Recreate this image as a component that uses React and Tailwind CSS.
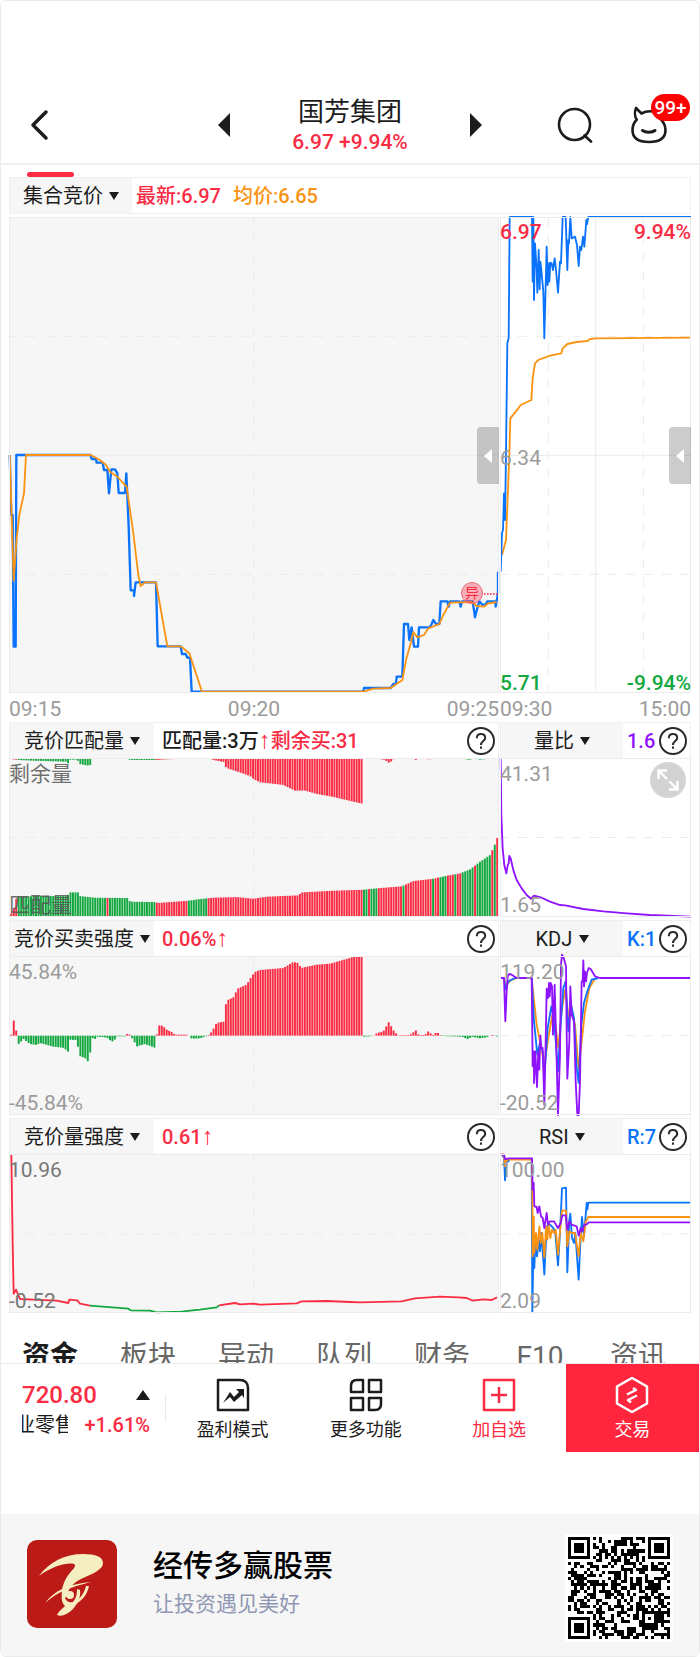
import React from "react";

const RED = "#fa2c44";
const GREEN = "#12a83f";
const BLUE = "#0b73fb";
const ORANGE = "#fb9312";
const PURPLE = "#9013fe";

const BAR_COUNT = 198;
const BAR_STEP = 7.4;

// series points are kept as "x y x y ..." strings, three units to a pixel
const PRICE =
  "29 735 34 915 38 915 41 1310 47 1310 49 735 272 735 275 747 288 747 290 758 308 758 312 780 322 780 327 850 334 778 345 778 352 790 356 849 375 849 379 790 386 950 392 1141 402 1141 402 1158 407 1117 468 1117 473 1309 542 1309 546 1332 557 1332 562 1343 570 1343 575 1445 1090 1445 1092 1434 1172 1434 1180 1422 1188 1422 1190 1400 1207 1400 1212 1242 1224 1242 1228 1290 1235 1252 1242 1310 1254 1310 1257 1252 1290 1252 1295 1242 1300 1230 1308 1242 1318 1242 1322 1174 1342 1174 1346 1190 1350 1174 1378 1174 1382 1190 1386 1174 1418 1174 1425 1222 1433 1190 1438 1174 1447 1184 1457 1184 1462 1174 1486 1174 1487 1190 1494 1150 1494 1085";
const PRICE_AVG =
  "29 735 41 1112 50 985 58 915 72 850 78 735 272 735 300 750 318 765 330 785 352 800 372 822 380 830 400 970 415 1095 422 1128 436 1117 468 1117 502 1309 542 1309 568 1330 606 1445 1090 1445 1120 1436 1172 1434 1207 1410 1218 1350 1232 1300 1240 1266 1252 1282 1272 1275 1285 1255 1318 1242 1330 1215 1350 1178 1415 1176 1430 1188 1452 1190 1465 1180 1490 1176";
const DAY =
  "452 1085 456 970 459 960 462 850 465 930 468 735 472 400 476 385 479 21 546 21 548 215 550 21 552 270 555 100 560 180 562 248 566 120 569 238 571 155 574 180 580 245 583 385 590 110 593 225 596 160 598 215 601 158 605 160 609 180 614 145 618 180 624 248 630 155 633 160 638 21 647 21 652 180 655 90 657 100 661 21 665 85 675 80 681 105 686 168 690 110 694 120 699 80 703 110 709 30 711 42 715 21 1023 21";
const DAY_AVG =
  "456 1035 468 990 478 735 481 625 505 595 512 585 544 570 548 505 555 460 565 450 600 437 634 430 638 415 652 402 680 396 712 393 720 387 740 385 1023 383";
const RATIO =
  "452 128 454 300 458 400 463 450 469 475 473 450 476 445 478 422 482 430 490 465 500 495 515 520 530 540 543 551 552 542 575 548 600 560 630 570 645 571 700 582 760 589 830 595 900 600 1023 605";
const KDJ_J =
  "452 190 462 190 466 320 470 230 473 185 478 178 485 180 500 190 545 190 548 455 552 410 552 505 556 410 561 517 565 410 568 465 571 362 574 400 578 400 583 570 588 330 590 222 594 250 597 205 599 245 602 205 606 215 609 360 614 210 618 360 624 601 630 420 633 150 636 120 641 130 648 155 650 350 652 492 658 380 661 215 665 300 672 320 677 500 682 601 686 601 690 500 695 200 698 200 700 137 702 215 705 170 708 200 711 175 716 160 722 163 735 185 750 190 1023 190";
const KDJ_K =
  "462 190 467 225 475 200 495 190 545 190 552 320 562 420 570 385 578 410 583 490 593 340 604 275 612 310 624 470 632 330 640 220 647 200 655 350 663 270 672 310 680 460 686 505 694 330 702 265 712 230 725 195 745 190";
const KDJ_D =
  "462 190 468 215 480 198 500 190 545 190 550 240 560 330 570 380 583 450 595 370 607 300 615 320 625 400 636 280 646 225 656 310 666 295 675 330 686 465 695 380 705 290 718 220 735 192";
const RSI_1 =
  "456 140 462 140 465 212 470 155 476 155 478 148 545 148 547 608 550 430 553 475 556 400 561 440 566 390 570 425 574 370 583 495 590 350 600 345 610 355 616 370 624 467 630 370 636 236 648 234 652 488 658 330 661 312 666 385 672 400 676 370 686 510 692 380 696 322 702 380 710 280 712 300 715 279 1023 279";
const RSI_2 =
  "452 135 462 135 465 170 470 150 545 150 547 240 548 440 551 320 553 430 558 370 562 420 568 350 572 400 577 370 583 443 588 350 592 390 596 345 601 385 606 360 612 370 617 360 624 435 630 365 636 303 648 303 652 410 658 365 665 370 675 370 686 440 692 370 700 395 707 335 711 330 715 322 1023 322";
const RSI_3 =
  "452 135 462 135 465 148 480 146 546 146 548 240 551 220 553 290 560 292 563 310 568 290 573 320 578 325 583 355 590 310 594 345 600 335 612 335 618 345 624 355 632 340 637 317 647 317 652 360 658 335 665 345 680 350 686 378 692 355 697 365 703 345 709 345 716 338 1023 338";

const MATCHED = [[34, 595], [42, 578], [48, 552], [55, 545], [120, 543], [202, 543], [209, 532], [234, 532], [239, 543], [285, 548], [385, 549], [390, 560], [468, 561], [472, 564], [565, 557], [600, 552], [640, 548], [710, 546], [760, 551], [800, 545], [895, 541], [905, 532], [1000, 527], [1090, 524], [1140, 519], [1205, 514], [1240, 498], [1300, 491], [1340, 482], [1380, 475], [1410, 463], [1440, 440], [1470, 420], [1482, 395], [1492, 368]];
const REMAIN = [[34, 128], [42, 133], [49, 133], [55, 134], [100, 136], [198, 139], [204, 144], [210, 133], [232, 133], [239, 146], [270, 152], [276, 128], [378, 128], [385, 133], [400, 134], [470, 134], [500, 132], [560, 130], [630, 130], [640, 134], [672, 140], [679, 158], [710, 168], [750, 182], [762, 192], [780, 201], [850, 209], [885, 226], [915, 226], [950, 236], [1000, 245], [1050, 257], [1090, 266], [1091, 128], [1130, 129], [1155, 134], [1169, 144], [1178, 133], [1190, 128], [1235, 129], [1247, 134], [1255, 129], [1287, 132], [1310, 130], [1385, 129], [1408, 134], [1420, 129], [1440, 133], [1480, 129]];
const STRENGTH = [[34, 360], [41, 316], [49, 348], [56, 388], [71, 373], [90, 388], [110, 391], [120, 385], [160, 396], [195, 400], [203, 418], [210, 375], [230, 376], [239, 424], [255, 430], [268, 445], [275, 366], [283, 377], [290, 366], [320, 368], [334, 380], [342, 380], [350, 365], [378, 365], [386, 350], [393, 372], [400, 370], [408, 396], [435, 388], [467, 400], [473, 332], [488, 333], [500, 345], [515, 352], [525, 360], [560, 360], [567, 363], [575, 372], [600, 371], [615, 366], [625, 362], [635, 352], [650, 325], [672, 321], [679, 258], [700, 248], [713, 222], [740, 210], [755, 185], [765, 172], [780, 166], [850, 160], [880, 142], [895, 145], [903, 160], [950, 150], [990, 147], [1050, 130], [1060, 126], [1091, 125], [1092, 366], [1120, 364], [1130, 356], [1150, 350], [1162, 330], [1169, 318], [1177, 347], [1185, 348], [1191, 362], [1230, 361], [1248, 347], [1256, 361], [1275, 361], [1285, 350], [1293, 357], [1298, 362], [1305, 355], [1318, 355], [1323, 364], [1385, 366], [1405, 374], [1415, 366], [1440, 371], [1460, 368], [1475, 360], [1481, 363], [1494, 366]];

const GREEN_MATCHED = [[52, 322], [329, 382], [389, 469], [564, 620], [1092, 1103], [1112, 1122], [1128, 1133], [1208, 1216], [1297, 1303], [1318, 1340], [1362, 1370], [1384, 1421], [1429, 1474], [1481, 1488]];
const GREEN_REMAIN = [[52, 378], [389, 469], [570, 625], [1092, 1125], [1380, 1470]];

function valueAt(keys, x) {
  for (let i = 1; i < keys.length; i++) {
    const [x0, y0] = keys[i - 1];
    const [x1, y1] = keys[i];
    if (x <= x1) return y0 + ((y1 - y0) * Math.max(0, x - x0)) / (x1 - x0);
  }
  return keys[keys.length - 1][1];
}

const inRuns = (runs, x) => runs.some(([a, b]) => x >= a && x <= b);

function Bars({ keys, base, green }) {
  const bars = [];
  for (let i = 0; i < BAR_COUNT; i++) {
    const x = 34 + i * BAR_STEP;
    const y = valueAt(keys, x);
    const isGreen = green ? inRuns(green, x) : y > base;
    bars.push(
      <rect
        key={i}
        x={x - 3}
        y={Math.min(y, base)}
        width="5.8"
        height={Math.abs(base - y)}
        fill={isGreen ? GREEN : RED}
      />
    );
  }
  return <g>{bars}</g>;
}

function Line({ points, color, width = 5.5 }) {
  return <polyline points={points} fill="none" stroke={color} strokeWidth={width} strokeLinejoin="round" />;
}

function Dash(props) {
  return <line {...props} stroke="#ebebeb" strokeWidth="3" strokeDasharray="27 27" />;
}

function Plot({ box, height, gray, children, overlay }) {
  return (
    <div className={gray ? "relative bg-[#f6f6f6]" : "relative bg-white"}>
      <svg
        viewBox={box}
        preserveAspectRatio="none"
        className={height === "tall" ? "block w-full h-[476px] overflow-visible" : "block w-full h-[159px] overflow-visible"}
      >
        {children}
      </svg>
      <div className="absolute inset-0 border border-[#ececec] pointer-events-none"></div>
      {overlay}
    </div>
  );
}

function Scale({ top, bottom, tone = "text-[#9b9b9b]" }) {
  return (
    <div className={`absolute inset-0 flex flex-col justify-between pt-1 text-[21px] leading-6 ${tone}`}>
      <span>{top}</span>
      <span>{bottom}</span>
    </div>
  );
}

function Picker({ id, label }) {
  return (
    <label htmlFor={id} className="flex items-center gap-[6px] text-[#1c1c1c]">
      <select id={id} aria-label={label} className="appearance-none bg-transparent outline-none text-xl leading-7">
        <option>{label}</option>
      </select>
      <svg viewBox="0 0 10 8" className="w-[10px] h-2 shrink-0" fill="#1c1c1c">
        <path d="M0 0h10L5 8z" />
      </svg>
    </label>
  );
}

function Help() {
  return (
    <button aria-label="说明" className="shrink-0 w-7 h-7 mr-[3px]">
      <svg viewBox="0 0 28 28" fill="none" stroke="#2b2b2b" strokeWidth="2" className="block w-7 h-7">
        <circle cx="14" cy="14" r="13" />
        <path d="M9.8 11.2c0-2.600 1.800-4.200 4.200-4.200s4.200 1.600 4.200 3.900c0 3.100-4.200 3.300-4.200 7" />
        <path d="M14 19.500v2.200" />
      </svg>
    </button>
  );
}

function PanelHead({ id, label, wide, children }) {
  return (
    <div className="flex items-center h-9 border border-[#efefef] border-b-0 bg-white">
      <div
        className={
          wide
            ? "flex items-center justify-center h-full w-36 shrink-0 bg-[#f6f6f6]"
            : "flex items-center justify-center h-full w-[122px] shrink-0 bg-[#f6f6f6]"
        }
      >
        <Picker id={id} label={label} />
      </div>
      <div
        className={
          wide
            ? "flex-1 min-w-0 pl-2 whitespace-nowrap text-xl leading-7 font-medium"
            : "flex-1 min-w-0 pl-1 whitespace-nowrap text-xl leading-7 font-medium"
        }
      >
        {children}
      </div>
      <Help />
    </div>
  );
}

const Up = () => <span className="font-['Liberation_Sans',sans-serif] text-2xl leading-5">↑</span>;

function Handle() {
  return (
    <button aria-label="展开" className="absolute right-0 top-[210px] w-[22px] h-[57px] rounded-l bg-black/20 flex items-center justify-center">
      <svg viewBox="0 0 8 14" className="w-2 h-[14px]" fill="#fff">
        <path d="M8 0v14L0 7z" />
      </svg>
    </button>
  );
}

function Header() {
  return (
    <header className="grid grid-cols-[1fr_264px_1fr] items-center pt-[91px] pb-[6px] border-b-2 border-[#efefef]">
      <button aria-label="返回" className="justify-self-start ml-7 w-5">
        <svg viewBox="0 0 20 32" fill="none" stroke="#1c1c1c" strokeWidth="3.500" strokeLinecap="round" strokeLinejoin="round" className="block w-5 h-8">
          <path d="M17 3L4 16l13 13" />
        </svg>
      </button>
      <div className="flex items-center justify-between">
        <button aria-label="上一只">
          <svg viewBox="0 0 12 24" className="block w-3 h-6" fill="#1c1c1c"><path d="M12 0v24L0 12z" /></svg>
        </button>
        <div className="text-center pt-[5px]">
          <h1 className="text-[26px] leading-[30px] text-[#1c1c1c]">国芳集团</h1>
          <p className="text-[21px] leading-[30px] font-medium text-[#fa2c44]">6.97 +9.94%</p>
        </div>
        <button aria-label="下一只">
          <svg viewBox="0 0 12 24" className="block w-3 h-6" fill="#1c1c1c"><path d="M0 0v24L12 12z" /></svg>
        </button>
      </div>
      <div className="flex items-center justify-end gap-[38px] pr-8">
        <button aria-label="搜索">
          <svg viewBox="0 0 36 36" fill="none" stroke="#1c1c1c" strokeWidth="2.600" strokeLinecap="round" className="block w-9 h-9">
            <circle cx="17.500" cy="17.500" r="15.500" />
            <path d="M27.500 28.500l6.500 6" />
          </svg>
        </button>
        <button aria-label="消息" className="relative">
          <svg viewBox="0 0 36 38" fill="none" stroke="#1c1c1c" strokeWidth="2.600" strokeLinejoin="round" strokeLinecap="round" className="block w-9 h-[38px]">
            <path d="M5 2c-1.500 4-1.300 9 .8 11.500C2.500 17 1.500 20 1.500 24c0 8 5 12 16.500 12s16.500-4 16.500-12c0-5-2.500-9-6.500-12.500M5 2l5.500 5.500C14 5.500 18 5 22 5.500" />
            <path d="M11.500 24.500c3 2.300 9.500 2.300 12.500 0" strokeWidth="3" />
          </svg>
          <span className="absolute left-5 -top-3 w-[39px] h-[27px] rounded-full bg-[#fe0000] text-white text-[19px] leading-[27px] font-medium text-center">99+</span>
        </button>
      </div>
    </header>
  );
}

function MainChart() {
  return (
    <>
      <div className="grid grid-cols-[490fr_191fr] gap-px mt-[3px]">
        <Plot
          box="27 21 1470 1428"
          height="tall"
          gray
          overlay={
            <>
              <Handle />
              <span className="absolute right-4 top-[365px] w-[22px] h-[22px] rounded-full border border-[#f06a7c] bg-[#fa2c44]/35 text-[#fa2c44] text-sm leading-5 text-center">异</span>
            </>
          }
        >
          <Dash x1="27" y1="379" x2="1497" y2="379" />
          <Dash x1="27" y1="1093" x2="1497" y2="1093" />
          <Dash x1="761" y1="21" x2="761" y2="1449" />
          <line x1="27" y1="736" x2="1497" y2="736" stroke="#ebebeb" strokeWidth="3" />
          <Line points={PRICE} color={BLUE} width={7} />
          <Line points={PRICE_AVG} color={ORANGE} />
          <line x1="1452" y1="1152" x2="1494" y2="1152" stroke={RED} strokeWidth="4" strokeDasharray="5 4" />
        </Plot>
        <Plot
          box="450 21 573 1428"
          height="tall"
          overlay={
            <>
              <div className="absolute inset-x-0 top-[3px] -bottom-[2px] flex flex-col justify-between text-[21px] leading-6">
                <div className="flex justify-between font-medium text-[#fa2c44]"><span>6.97</span><span>9.94%</span></div>
                <span className="text-[#9b9b9b]">6.34</span>
                <div className="flex justify-between font-medium text-[#12a83f]"><span>5.71</span><span>-9.94%</span></div>
              </div>
              <Handle />
            </>
          }
        >
          <Dash x1="450" y1="379" x2="1023" y2="379" />
          <Dash x1="450" y1="1093" x2="1023" y2="1093" />
          <Dash x1="595" y1="21" x2="595" y2="1449" />
          <Dash x1="880" y1="21" x2="880" y2="1449" />
          <path d="M450 736H1023M737 21V1449" stroke="#ebebeb" strokeWidth="3" />
          <Line points={DAY_AVG} color={ORANGE} />
          <Line points={DAY} color={BLUE} />
        </Plot>
      </div>
      <div className="grid grid-cols-[490fr_191fr] gap-px h-[29px] text-[21px] leading-8 text-[#9b9b9b]">
        <div className="grid grid-cols-3"><span>09:15</span><span className="text-center">09:20</span><span className="text-right">09:25</span></div>
        <div className="flex justify-between"><span>09:30</span><span>15:00</span></div>
      </div>
    </>
  );
}

function SubCharts() {
  return (
    <div className="flex flex-col gap-[3px]">
      <div className="grid grid-cols-[490fr_191fr] gap-x-px">
        <PanelHead id="match" label="竞价匹配量" wide>
          <span className="text-[#1c1c1c]">匹配量:3万</span>
          <span className="text-[#fa2c44]"><Up />剩余买:31</span>
        </PanelHead>
        <PanelHead id="ratio" label="量比"><span className="text-[#9013fe]">1.6</span></PanelHead>
        <Plot box="27 128 1470 478" gray overlay={<Scale top="剩余量" bottom="匹配量" tone="text-[#555]/85" />}>
          <Dash x1="27" y1="367" x2="1497" y2="367" />
          <Dash x1="761" y1="128" x2="761" y2="606" />
          <Bars keys={REMAIN} base={128} green={GREEN_REMAIN} />
          <Bars keys={MATCHED} base={606} green={GREEN_MATCHED} />
        </Plot>
        <Plot
          box="450 128 573 478"
          overlay={
            <>
              <Scale top="41.31" bottom="1.65" />
              <button aria-label="全屏" className="absolute right-[5px] top-1 w-9 h-9 rounded-full bg-[#d3d3d3]">
                <svg viewBox="0 0 36 36" fill="none" stroke="#fff" strokeWidth="2.400" className="block w-9 h-9">
                  <path d="M8.500 17V8.500H17M9 9l8 8M27.500 19v8.500H19M27 27l-7.500-7.500" />
                </svg>
              </button>
            </>
          }
        >
          <Dash x1="450" y1="367" x2="1023" y2="367" />
          <Line points={RATIO} color={PURPLE} />
        </Plot>
      </div>

      <div className="grid grid-cols-[490fr_191fr] gap-x-px">
        <PanelHead id="strength" label="竞价买卖强度" wide>
          <span className="text-[#fa2c44]">0.06%<Up /></span>
        </PanelHead>
        <PanelHead id="kdj" label="KDJ"><span className="text-[#0b73fb]">K:1</span></PanelHead>
        <Plot box="27 124 1470 477" gray overlay={<Scale top="45.84%" bottom="-45.84%" />}>
          <Dash x1="761" y1="124" x2="761" y2="601" />
          <Bars keys={STRENGTH} base={363} />
        </Plot>
        <Plot box="450 124 573 477" overlay={<Scale top="119.20" bottom="-20.52" />}>
          <Dash x1="450" y1="363" x2="1023" y2="363" />
          <Line points={KDJ_D} color={ORANGE} />
          <Line points={KDJ_K} color={BLUE} />
          <Line points={KDJ_J} color={PURPLE} />
        </Plot>
      </div>

      <div className="grid grid-cols-[490fr_191fr] gap-x-px">
        <PanelHead id="volume" label="竞价量强度" wide>
          <span className="text-[#fa2c44]">0.61<Up /></span>
        </PanelHead>
        <PanelHead id="rsi" label="RSI"><span className="text-[#0b73fb]">R:7</span></PanelHead>
        <Plot box="27 133 1470 477" gray overlay={<Scale top="10.96" bottom="-0.52" tone="text-[#777]" />}>
          <Dash x1="27" y1="373" x2="1497" y2="373" />
          <Dash x1="761" y1="133" x2="761" y2="610" />
          <Line color={RED} points="34 135 38 400 41 552 48 540 60 568 100 570 170 573 205 580 208 570 232 572 240 582 270 588" />
          <Line color={GREEN} points="270 588 385 597 392 602 450 603 470 608 545 606 570 603 600 600 650 593 657 587" />
          <Line color={RED} points="657 587 705 580 720 584 760 582 780 585 890 581 905 575 980 574 1050 577 1080 578 1205 575 1245 566 1320 561 1375 563 1400 565 1418 573 1450 569 1475 571 1491 563" />
        </Plot>
        <Plot box="450 133 573 477" overlay={<Scale top="100.00" bottom="2.09" />}>
          <Dash x1="450" y1="373" x2="1023" y2="373" />
          <Line points={RSI_1} color={BLUE} />
          <Line points={RSI_2} color={ORANGE} />
          <Line points={RSI_3} color={PURPLE} />
        </Plot>
      </div>
    </div>
  );
}

const TABS = ["资金", "板块", "异动", "队列", "财务", "F10", "资讯"];

function Action({ label, color, children }) {
  return (
    <button className={`flex-1 flex flex-col items-center gap-[3px] pt-[13px] text-lg leading-7 ${color}`}>
      <svg viewBox="0 0 36 36" fill="none" stroke="currentColor" strokeWidth="2.500" strokeLinejoin="round" className="block w-9 h-9">
        {children}
      </svg>
      {label}
    </button>
  );
}

function BottomBar() {
  return (
    <div className="flex h-[89px] border-t border-[#ececec]">
      <div className="w-[165px] shrink-0 flex items-center">
        <div className="flex-1 pl-[21px] pr-[15px] pt-[3px]">
          <div className="flex items-center justify-between font-medium text-[#fa2c44] text-2xl leading-[30px]">
            720.80
            <svg viewBox="0 0 14 10" className="w-[14px] h-[10px]" fill="#1c1c1c"><path d="M7 0l7 10H0z" /></svg>
          </div>
          <div className="flex items-center justify-between leading-[30px]">
            <span className="w-[46px] overflow-hidden flex justify-center text-xl leading-[30px] whitespace-nowrap text-[#1c1c1c]">业零售</span>
            <span className="text-xl leading-[30px] font-medium text-[#fa2c44]">+1.61%</span>
          </div>
        </div>
        <div className="w-px h-7 bg-[#e8e8e8]"></div>
      </div>
      <Action label="盈利模式" color="text-[#1c1c1c]">
        <path d="M3 3h22c5 0 8 3 8 8v22H3z" />
        <path d="M8 26l7-11 4 5 5-5-3-3h8v9l-2-3-8 7-4-5z" fill="currentColor" stroke="none" />
      </Action>
      <Action label="更多功能" color="text-[#1c1c1c]">
        <path d="M15 3v12H3V9c0-4 2-6 6-6zM21 3h12v12H21zM3 21h12v12H3zM21 21h12v6c0 4-2 6-6 6h-6z" />
      </Action>
      <Action label="加自选" color="text-[#fa2c44]">
        <path d="M3 3h30v30H3zM18 10v16M10 18h16" />
      </Action>
      <Action label="交易" color="bg-[#ff253d] text-white">
        <path d="M18 1l15 8.500v17L18 35 3 26.500v-17z" />
        <path d="M13 17.500l9-4.500-3-2M23 18.500L14 23l3 2.500" />
      </Action>
    </div>
  );
}

function QrCode() {
  const n = 33;
  const cells = [];
  const finders = [[0, 0], [26, 0], [0, 26]];
  let seed = 20231;
  for (let r = 0; r < n; r++) {
    for (let c = 0; c < n; c++) {
      seed = (seed * 48271) % 2147483647;
      const near = finders.some(([fx, fy]) => c >= fx - 1 && c <= fx + 7 && r >= fy - 1 && r <= fy + 7);
      if (near || (c >= 24 && c <= 28 && r >= 24 && r <= 28)) continue;
      const timing = r === 6 || c === 6;
      if (timing ? (r + c) % 2 === 0 : seed / 2147483647 > 0.5) cells.push(`M${c} ${r}h1v1h-1z`);
    }
  }
  return (
    <svg viewBox="-1 -1 35 35" className="block w-[108px] h-[108px] mt-2 bg-white" shapeRendering="crispEdges">
      <path d={cells.join("")} />
      {finders.map(([x, y]) => (
        <g key={`${x}-${y}`}>
          <rect x={x} y={y} width="7" height="7" />
          <rect x={x + 1} y={y + 1} width="5" height="5" fill="#fff" />
          <rect x={x + 2} y={y + 2} width="3" height="3" />
        </g>
      ))}
      <path d="M24 24h5v5h-5zM25 25v3h3v-3zM26 26h1v1h-1z" fillRule="evenodd" />
    </svg>
  );
}

function Footer() {
  return (
    <footer className="flex items-center bg-[#f6f6f6] mt-[62px] h-[142px] pb-[2px] px-[26px]">
      <svg viewBox="0 0 90 88" className="w-[90px] h-[88px] shrink-0">
        <rect width="90" height="88" rx="10" fill="#bb1a17" />
        <g fill="#f5eec0">
          <path d="M12 36C22 22 38 14 56 14c13 0 20 3 20 9 0 6-8 10-22 16-8 4-13 10-14 17l-4 4c-3-8 0-18 6-26 4-5 8-8 5-10-6-2-22 2-35 12z" />
          <path d="M18 63c9-12 23-19 46-21-20 5-34 10-46 21z" />
          <path d="M36 48c-2 8-2 14 2 18-3 3-7 6-8 9 5 2 11-1 16-6 5-6 8-12 7-19l-3-1c0 6-1 9-4 13-4 1-7-1-8-4-1-4 0-7 1-10z" />
          <circle cx="43" cy="55" r="4" />
          <path d="M62 46c-2 9-7 15-15 19l-1-2c7-4 11-9 13-17z" />
        </g>
      </svg>
      <div className="flex-1 pl-9">
        <p className="text-[30px] leading-10 font-medium text-black">经传多赢股票</p>
        <p className="text-[21px] leading-9 text-[#9098b4]">让投资遇见美好</p>
      </div>
      <QrCode />
    </footer>
  );
}

export default function App() {
  return (
    <div className="w-full bg-white border border-[#ebebeb] rounded-md overflow-hidden font-['Roboto','Noto_Sans_CJK_SC',sans-serif]">
      <Header />
      <main className="px-2 pt-[7px]">
        <div className="w-[47px] h-[5px] ml-[18px] rounded-full bg-[#fa2c44]"></div>
        <div className="flex items-center h-[37px] border border-[#efefef] text-xl leading-7 font-medium">
          <div className="flex items-center justify-center w-[122px] h-full bg-[#f6f6f6] font-normal">
            <Picker id="mode" label="集合竞价" />
          </div>
          <span className="ml-1 text-[#fa2c44]">最新:6.97</span>
          <span className="ml-3 text-[#fb9312]">均价:6.65</span>
        </div>
        <MainChart />
        <SubCharts />
      </main>
      <nav className="grid grid-cols-7 pr-3 pt-[26px] h-[50px] overflow-hidden text-[28px] leading-9 text-[#666]">
        {TABS.map((t, i) => (
          <a key={t} href="#" className={i === 0 ? "text-center font-bold text-[#1c1c1c]" : "text-center"}>
            {t}
          </a>
        ))}
      </nav>
      <BottomBar />
      <Footer />
    </div>
  );
}
